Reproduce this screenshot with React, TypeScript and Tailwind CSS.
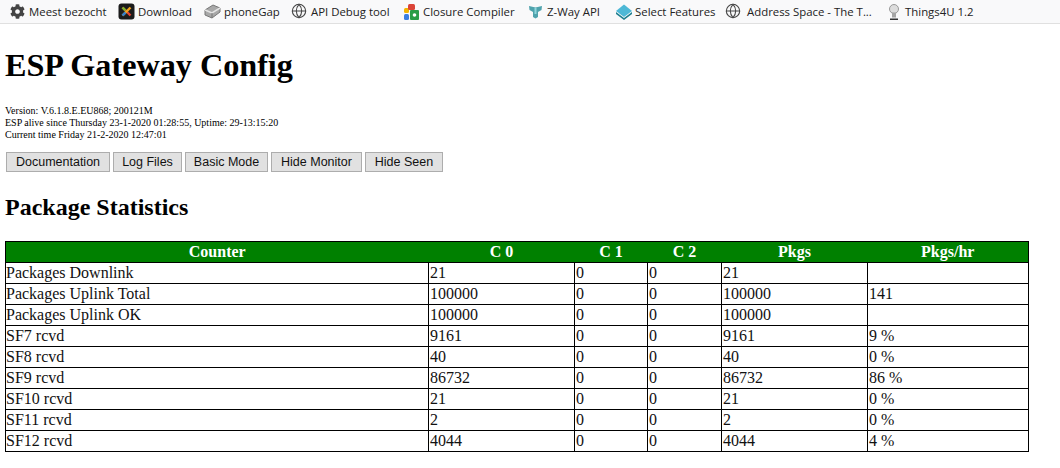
import React from "react";
import { Globe } from "lucide-react";
import { FaCog } from "react-icons/fa";

const JoomlaIcon = () => (
  <svg width="17" height="17" viewBox="0 0 17 17" className="shrink-0">
    <rect x="0.5" y="0.5" width="16" height="16" rx="3" fill="#1c1c1c" />
    <path d="M4.5 4.5l8 8" stroke="#e8442e" strokeWidth="2.4" />
    <path d="M12.5 4.5l-8 8" stroke="#f2a21e" strokeWidth="2.4" />
    <path d="M4.5 4.5l3 3" stroke="#7ab92d" strokeWidth="2.4" />
    <path d="M4.5 12.5l3-3" stroke="#2f7fd1" strokeWidth="2.4" />
  </svg>
);

const PhoneGapIcon = () => (
  <svg width="17" height="17" viewBox="0 0 17 17" className="shrink-0">
    <path d="M1 7l8-5 7 3v4l-8 6-7-3z" fill="#a8a8a8" stroke="#777" />
    <path d="M1 7l7 3 8-5" fill="none" stroke="#e4e4e4" strokeWidth="1.5" />
    <path d="M8 10v5" stroke="#777" />
  </svg>
);

const GoogleIcon = () => (
  <svg width="17" height="18" viewBox="0 0 17 18" className="shrink-0">
    <rect x="1" y="5" width="5" height="5" rx="1.5" fill="#f4b400" />
    <rect x="5" y="1" width="7" height="6" rx="1.5" fill="#db4437" />
    <rect x="7" y="7" width="9" height="10" rx="1" fill="#2a9d47" />
    <rect x="1" y="11" width="5" height="6" rx="1.5" fill="#3d7ee0" />
    <circle cx="11.5" cy="12" r="1.8" fill="#fff" />
  </svg>
);

const ZWayIcon = () => (
  <svg width="15" height="15" viewBox="0 0 15 15" className="shrink-0">
    <path d="M1 2l6.5 1.5L14 2l-.5 4L10 8v5l-2.5 1.5L5 13V8L1.5 6z" fill="#4fa3ad" />
    <path d="M7.5 4v6" stroke="#8fd6dc" strokeWidth="2" />
  </svg>
);

const SelectIcon = () => (
  <svg width="18" height="18" viewBox="0 0 18 18" className="shrink-0">
    <path d="M9 1.5l8 6.5-8 6-8-6z" fill="#4db8d6" />
    <path d="M1 9l8 6 8-6v2l-8 6-8-6z" fill="#1e7f8f" />
  </svg>
);

const ThingsIcon = () => (
  <svg width="14" height="18" viewBox="0 0 14 18" className="shrink-0">
    <circle cx="7" cy="6" r="4.5" fill="#dcdcdc" stroke="#999" />
    <rect x="5" y="9.5" width="4" height="5" fill="#a5a5a5" />
    <rect x="3" y="15.5" width="8" height="1.5" fill="#333" />
  </svg>
);

const bookmarks = [
  { label: "Meest bezocht", icon: <FaCog size={15} color="#444" className="shrink-0" />, cls: "w-[118px] pl-[10px] gap-[4px]" },
  { label: "Download", icon: <JoomlaIcon />, cls: "w-[86px] gap-[3px]" },
  { label: "phoneGap", icon: <PhoneGapIcon />, cls: "w-[87px] gap-[3px]" },
  { label: "API Debug tool", icon: <Globe size={16} color="#444" strokeWidth={1.6} className="shrink-0" />, cls: "w-[112px] gap-[4px]" },
  { label: "Closure Compiler", icon: <GoogleIcon />, cls: "w-[125px] gap-[3px]" },
  { label: "Z-Way API", icon: <ZWayIcon />, cls: "w-[87px] gap-[4px]" },
  { label: "Select Features", icon: <SelectIcon />, cls: "w-[110px] gap-[2px]" },
  { label: "Address Space - The T...", icon: <Globe size={16} color="#444" strokeWidth={1.6} className="shrink-0" />, cls: "w-[162px] gap-[6px]" },
  { label: "Things4U 1.2", icon: <ThingsIcon />, cls: "gap-[4px]" },
];

const buttons = [
  { label: "Documentation", cls: "w-[104px]" },
  { label: "Log Files", cls: "w-[69px]" },
  { label: "Basic Mode", cls: "w-[83px]" },
  { label: "Hide Monitor", cls: "w-[91px]" },
  { label: "Hide Seen", cls: "w-[78px]" },
];

const headers = ["Counter", "C 0", "C 1", "C 2", "Pkgs", "Pkgs/hr"];

const rows = [
  ["Packages Downlink", "21", "0", "0", "21", ""],
  ["Packages Uplink Total", "100000", "0", "0", "100000", "141"],
  ["Packages Uplink OK", "100000", "0", "0", "100000", ""],
  ["SF7 rcvd", "9161", "0", "0", "9161", "9 %"],
  ["SF8 rcvd", "40", "0", "0", "40", "0 %"],
  ["SF9 rcvd", "86732", "0", "0", "86732", "86 %"],
  ["SF10 rcvd", "21", "0", "0", "21", "0 %"],
  ["SF11 rcvd", "2", "0", "0", "2", "0 %"],
  ["SF12 rcvd", "4044", "0", "0", "4044", "4 %"],
];

const App = () => {
  return (
    <div className="w-[1060px] h-[468px] overflow-hidden bg-white text-black font-['Liberation_Serif',serif]">
      <div className="flex items-center h-[24px] bg-[#f9f9fa] border-b border-[#e0e0e0] font-['Open_Sans',sans-serif] text-[11.4px] text-[#222] whitespace-nowrap">
        {bookmarks.map((b) => (
          <div key={b.label} className={`flex items-center shrink-0 ${b.cls}`}>
            {b.icon}
            <span>{b.label}</span>
          </div>
        ))}
      </div>

      <div className="px-[5px]">
        <h1 className="text-[32.2px] leading-[37px] font-bold mt-[23px]">ESP Gateway Config</h1>

        <div className="text-[10px] leading-[12px] mt-[21px]">
          <div>Version: V.6.1.8.E.EU868; 200121M</div>
          <div>ESP alive since Thursday 23-1-2020 01:28:55, Uptime: 29-13:15:20</div>
          <div>Current time Friday 21-2-2020 12:47:01</div>
        </div>

        <div className="flex gap-[3px] ml-px mt-[11px]">
          {buttons.map((b) => (
            <button
              key={b.label}
              className={`h-[20px] p-0 pt-px bg-[#e1e1e1] border border-[#adadad] font-['Liberation_Sans',sans-serif] text-[12.5px] leading-none text-[#111] ${b.cls}`}
            >
              {b.label}
            </button>
          ))}
        </div>

        <h2 className="text-[24px] leading-[28px] font-bold mt-[21px]">Package Statistics</h2>

        <table className="table-fixed border-collapse w-[1023px] mt-[20px] text-[16px] leading-[20px]">
          <colgroup>
            <col className="w-[423px]" />
            <col className="w-[146px]" />
            <col className="w-[73px]" />
            <col className="w-[74px]" />
            <col className="w-[146px]" />
            <col className="w-[161px]" />
          </colgroup>
          <thead>
            <tr className="bg-[#008000] text-white">
              {headers.map((h) => (
                <th key={h} className="h-[21px] p-0 font-bold text-center border-y border-black first:border-l last:border-r">
                  {h}
                </th>
              ))}
            </tr>
          </thead>
          <tbody>
            {rows.map((row) => (
              <tr key={row[0]}>
                {row.map((cell, i) => (
                  <td key={i} className="h-[21px] p-0 pl-px first:pl-0 border border-black text-[#111] whitespace-nowrap">
                    {cell}
                  </td>
                ))}
              </tr>
            ))}
          </tbody>
        </table>
      </div>
    </div>
  );
};

export default App;
